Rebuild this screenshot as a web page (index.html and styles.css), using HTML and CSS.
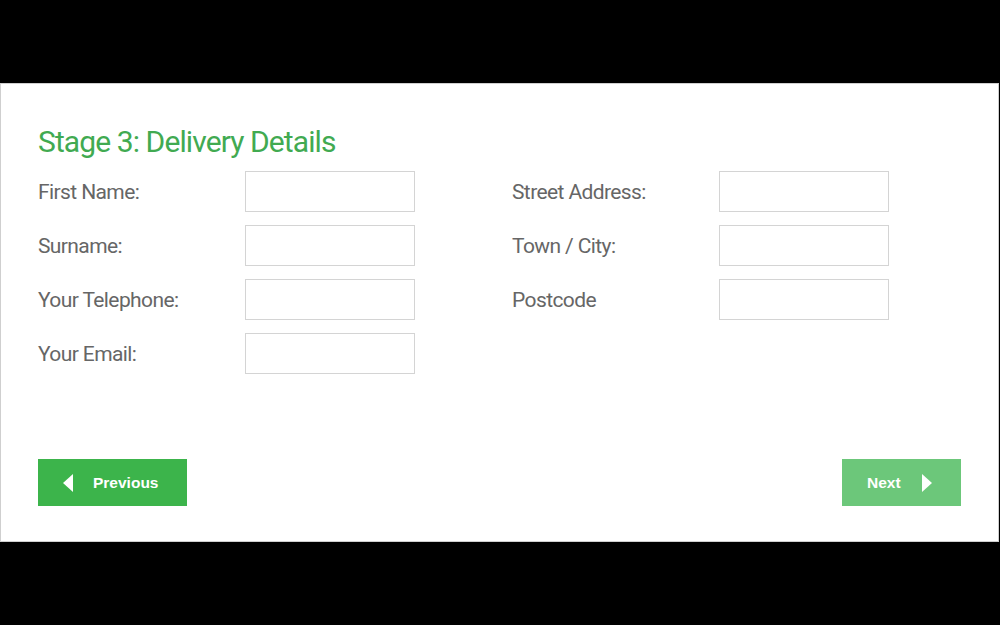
FILE: index.html
```html
<!DOCTYPE html>
<html>
<head>
<meta charset="utf-8">
<link rel="stylesheet" href="styles.css">
</head>
<body>
<div class="panel">
  <h1 class="title">Stage 3: Delivery Details</h1>
  <div class="form">
    <div class="col">
      <div class="row"><label class="label">First Name:</label><input class="field" type="text"></div>
      <div class="row"><label class="label">Surname:</label><input class="field" type="text"></div>
      <div class="row"><label class="label">Your Telephone:</label><input class="field" type="text"></div>
      <div class="row"><label class="label">Your Email:</label><input class="field" type="text"></div>
    </div>
    <div class="col">
      <div class="row"><label class="label">Street Address:</label><input class="field" type="text"></div>
      <div class="row"><label class="label">Town / City:</label><input class="field" type="text"></div>
      <div class="row"><label class="label">Postcode</label><input class="field" type="text"></div>
    </div>
  </div>
  <div class="actions">
    <button class="btn btn-prev"><svg class="arrow" viewBox="0 0 10 18" width="10" height="18"><path d="M10 0 L0 9 L10 18 Z" fill="#fff"/></svg><span>Previous</span></button>
    <button class="btn btn-next"><span>Next</span><svg class="arrow" viewBox="0 0 10 18" width="10" height="18"><path d="M0 0 L10 9 L0 18 Z" fill="#fff"/></svg></button>
  </div>
</div>
</body>
</html>
```
FILE: styles.css
```css
html, body {
  margin: 0;
  padding: 0;
  background: #000;
  height: 625px;
  overflow: hidden;
}
.panel {
  box-sizing: border-box;
  margin-top: 83px;
  width: 999px;
  height: 459px;
  background: #fff;
  border: 1px solid #cfcfcf;
  padding: 38px 37px 0 37px;
  display: flex;
  flex-direction: column;
  font-family: Roboto, "Liberation Sans", sans-serif;
}
.title {
  margin: 0;
  font-weight: 400;
  font-size: 30px;
  line-height: 40px;
  color: #41aa51;
  letter-spacing: -0.9px;
}
.form {
  display: flex;
  gap: 97px;
  margin-top: 9px;
}
.col {
  display: flex;
  flex-direction: column;
  gap: 13px;
}
.row {
  display: flex;
  align-items: center;
}
.label {
  width: 207px;
  font-size: 21px;
  color: #666;
  letter-spacing: -0.6px;
}
.field {
  box-sizing: border-box;
  width: 170px;
  height: 41px;
  margin: 0;
  border: 1px solid #d4d4d4;
  background: #fff;
  padding: 0 8px;
}
.actions {
  display: flex;
  justify-content: space-between;
  margin-top: 85px;
}
.btn {
  box-sizing: border-box;
  height: 47px;
  border: none;
  color: #fff;
  font-family: "Liberation Sans", Arial, sans-serif;
  font-size: 15.5px;
  font-weight: bold;
  display: flex;
  align-items: center;
  padding: 0 25px;
  cursor: pointer;
}
.btn-prev {
  width: 149px;
  background: #3cb44b;
  gap: 20px;
}
.btn-next {
  width: 119px;
  background: #6cc77a;
  gap: 21px;
}
.arrow {
  display: block;
}
```
